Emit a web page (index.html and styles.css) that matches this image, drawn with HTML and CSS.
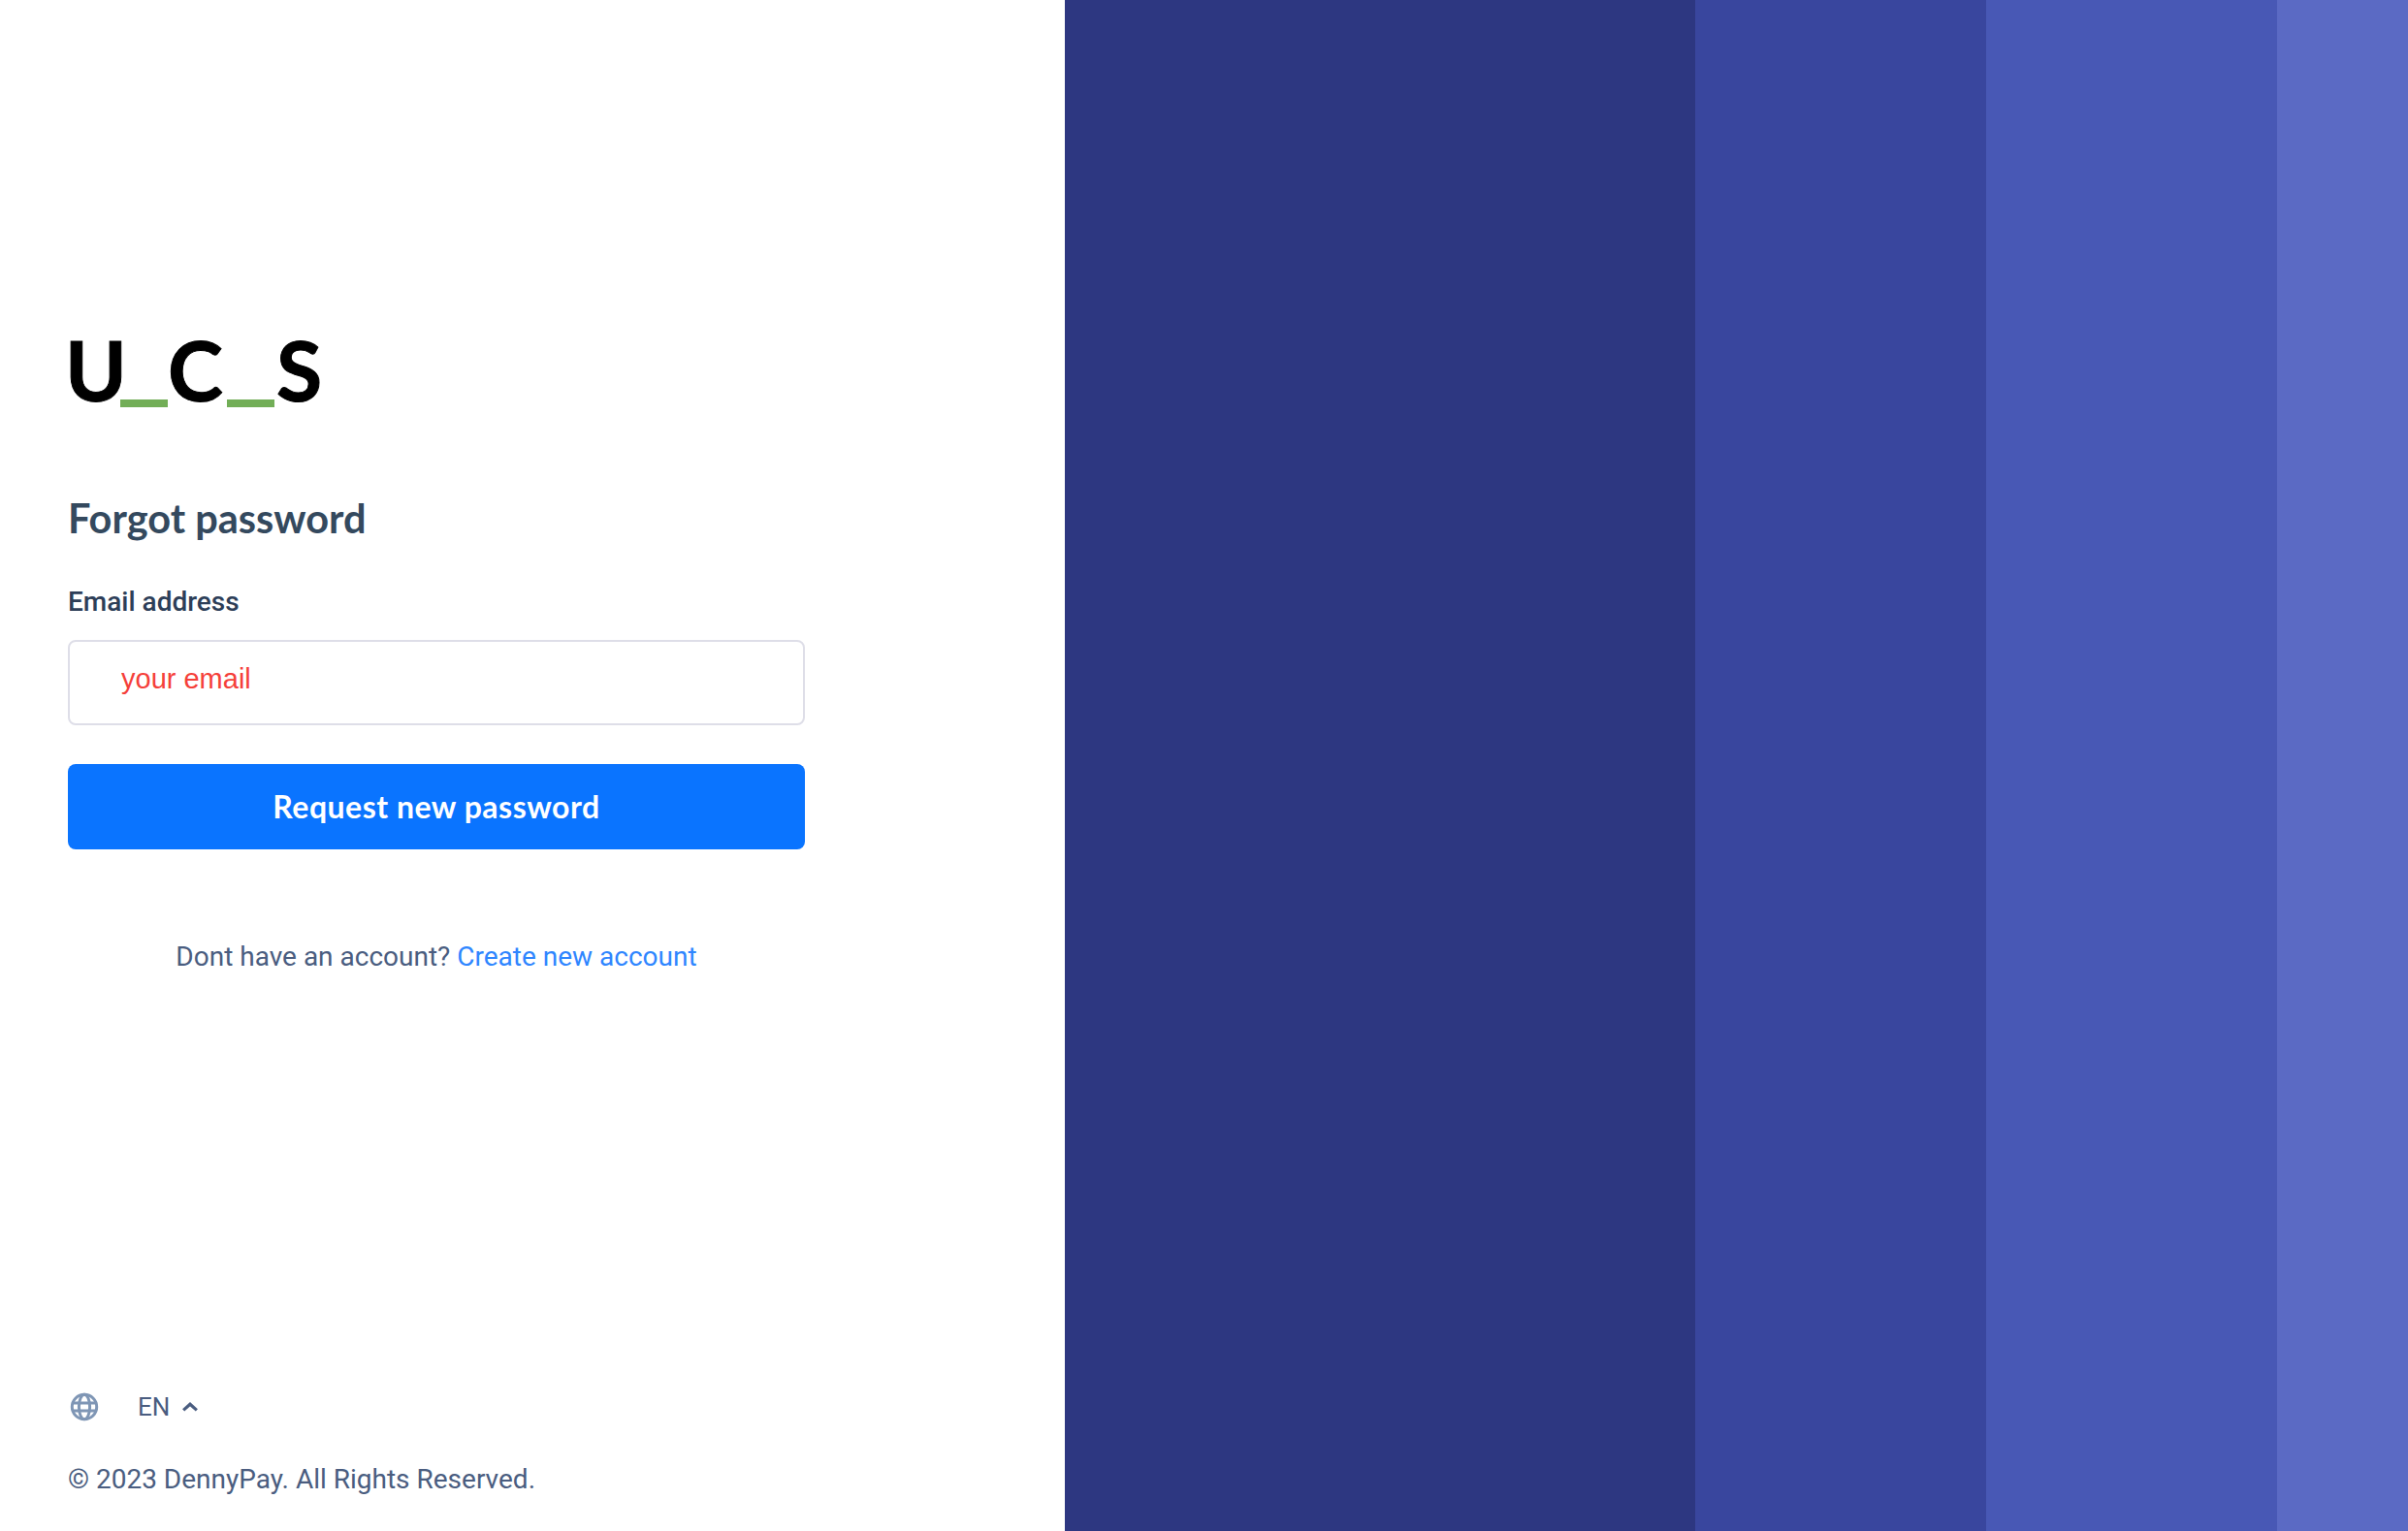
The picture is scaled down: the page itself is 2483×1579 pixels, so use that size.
FILE: index.html
```html
<!DOCTYPE html>
<html lang="en">
<head>
  <meta charset="UTF-8" />
  <title>Forgot password</title>
  <link rel="stylesheet" href="styles.css">
</head>
<body>
  <main class="page">
    <section class="panel">
      <form class="form">
        <div class="logo">
          <span class="logo-u">U</span>
          <span class="logo-bar"></span>
          <span class="logo-c">C</span>
          <span class="logo-bar"></span>
          <span class="logo-s">S</span>
        </div>
        <h1>Forgot password</h1>
        <label for="email">Email address</label>
        <input type="text" id="email" placeholder="your email" />
        <button type="button">Request new password</button>
        <p class="signup">Dont have an account? <a href="#">Create new account</a></p>
      </form>

      <footer class="footer">
        <div class="lang">
          <svg class="globe" viewBox="0 0 30 30" fill="none" stroke="currentColor" stroke-width="3">
            <circle cx="15" cy="15" r="12.7" />
            <ellipse cx="15" cy="15" rx="5.6" ry="12.7" />
            <path d="M3.4 11h23.2M3.4 19h23.2" />
          </svg>
          <span class="lang-code">EN</span>
          <svg class="chevron" viewBox="0 0 14 8" fill="none" stroke="currentColor" stroke-width="2.8">
            <path d="M1 7l6-5.4L13 7" />
          </svg>
        </div>
        <p class="copyright">© 2023 DennyPay. All Rights Reserved.</p>
      </footer>
    </section>

    <div class="stripes">
      <div class="stripe stripe-1"></div>
      <div class="stripe stripe-2"></div>
      <div class="stripe stripe-3"></div>
      <div class="stripe stripe-4"></div>
    </div>
  </main>
</body>
</html>
```

FILE: styles.css
```css
:root {
  --blue: #0a74ff;
  --text: #4a5d80;
  --heading: #34495e;
}

* {
  box-sizing: border-box;
}

body {
  margin: 0;
  font-family: Roboto, Arial, sans-serif;
  color: var(--text);
  background: #fff;
}

.page {
  display: flex;
  height: 100vh;
  overflow: hidden;
}

.panel {
  width: 1098px;
  flex-shrink: 0;
  display: flex;
  flex-direction: column;
  padding: 0 70px;
}

.form {
  width: 760px;
  padding-top: 343px;
  display: flex;
  flex-direction: column;
}

.logo {
  display: flex;
  align-items: flex-start;
  height: 77px;
  font-family: Lato, sans-serif;
  font-weight: 700;
  font-size: 86px;
  line-height: 76px;
  color: #000;
  -webkit-text-stroke: 1px #000;
}

.logo-bar {
  width: 49px;
  height: 8px;
  margin-top: 69px;
  background: #72ae57;
}

.logo-u {
  width: 54px;
  margin-left: -3px;
  margin-right: 3px;
}

.logo-c {
  width: 61px;
}

.logo-s {
  margin-left: 2px;
}

h1 {
  margin: 91px 0 0;
  font-family: Lato, sans-serif;
  font-size: 41.5px;
  line-height: 46px;
  font-weight: 700;
  color: var(--heading);
}

label {
  margin-top: 47px;
  font-size: 28px;
  line-height: 34px;
  font-weight: 500;
  color: #2d3e58;
}

input {
  height: 88px;
  margin-top: 22px;
  padding: 0 53px 8px;
  border: 2px solid #dedee8;
  border-radius: 8px;
  font-family: "Liberation Sans", Arial, sans-serif;
  font-size: 29px;
  outline: none;
}

input::placeholder {
  color: #f5403a;
  opacity: 1;
}

button {
  height: 88px;
  margin-top: 40px;
  padding-bottom: 3px;
  border: none;
  border-radius: 8px;
  background: var(--blue);
  color: #fff;
  font-family: Lato, sans-serif;
  font-size: 32px;
  font-weight: 700;
  letter-spacing: 0.5px;
  cursor: pointer;
}

.signup {
  margin: 94px 0 0;
  text-align: center;
  font-size: 28px;
  line-height: 34px;
}

.signup a {
  color: #2f86ff;
  text-decoration: none;
}

.footer {
  margin-top: auto;
  padding-bottom: 36px;
}

.lang {
  display: flex;
  align-items: center;
  height: 30px;
  padding-left: 2px;
}

.globe {
  width: 30px;
  height: 30px;
  color: #7f96b5;
}

.lang-code {
  margin-left: 40px;
  font-size: 26px;
}

.chevron {
  width: 16px;
  height: 10px;
  margin-left: 13px;
}

.copyright {
  margin: 43px 0 0;
  font-size: 28px;
  line-height: 34px;
}

.stripes {
  flex: 1;
  display: flex;
}

.stripe {
  height: 100%;
}

.stripe-1 {
  width: 650px;
  background: #2d3781;
}

.stripe-2 {
  width: 300px;
  background: #39469e;
}

.stripe-3 {
  width: 300px;
  background: #4858b5;
}

.stripe-4 {
  flex: 1;
  background: #5b6ac4;
}
```
